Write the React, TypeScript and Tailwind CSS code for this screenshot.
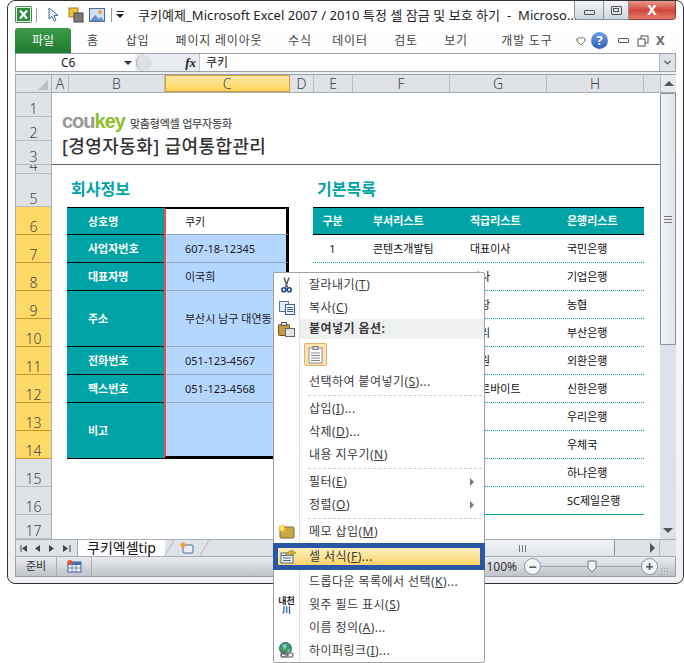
import { ChevronDown, Heart } from "lucide-react";

const columns = [
  { name: "A", w: "w-[17px]" },
  { name: "B", w: "w-[96px]" },
  { name: "C", w: "w-[125px]", active: true },
  { name: "D", w: "w-[24px]" },
  { name: "E", w: "w-[39px]" },
  { name: "F", w: "w-[97px]" },
  { name: "G", w: "w-[97px]" },
  { name: "H", w: "w-[97px]" },
  { name: "", w: "w-[17px]" },
];

const rows = [
  { n: 1, h: "h-[24px]" },
  { n: 2, h: "h-[24px]" },
  { n: 3, h: "h-[24px]" },
  { n: 4, h: "h-[9px]" },
  { n: 5, h: "h-[33px]" },
  { n: 6, h: "h-[28px]", on: true },
  { n: 7, h: "h-[28px]", on: true },
  { n: 8, h: "h-[28px]", on: true },
  { n: 9, h: "h-[28px]", on: true },
  { n: 10, h: "h-[28px]", on: true },
  { n: 11, h: "h-[28px]", on: true },
  { n: 12, h: "h-[28px]", on: true },
  { n: 13, h: "h-[28px]", on: true },
  { n: 14, h: "h-[28px]", on: true },
  { n: 15, h: "h-[28px]" },
  { n: 16, h: "h-[28px]" },
  { n: 17, h: "h-[24px]" },
];

const company = [
  { label: "상호명", value: "쿠키", h: "h-[28px]", first: true },
  { label: "사업자번호", value: "607-18-12345", h: "h-[28px]" },
  { label: "대표자명", value: "이국희", h: "h-[28px]" },
  { label: "주소", value: "부산시 남구 대연동", h: "h-[56px]" },
  { label: "전화번호", value: "051-123-4567", h: "h-[28px]" },
  { label: "팩스번호", value: "051-123-4568", h: "h-[28px]" },
  { label: "비고", value: "", h: "h-[56px]", last: true },
];

const lists = [
  ["1", "콘텐츠개발팀", "대표이사", "국민은행"],
  ["", "", "이사", "기업은행"],
  ["", "", "부장", "농협"],
  ["", "", "대리", "부산은행"],
  ["", "", "사원", "외환은행"],
  ["", "", "아르바이트", "신한은행"],
  ["", "", "", "우리은행"],
  ["", "", "", "우체국"],
  ["", "", "", "하나은행"],
  ["", "", "", "SC제일은행"],
];

const ribbonTabs = [
  { t: "홈", w: "w-[44px]" },
  { t: "삽입", w: "w-[45px]" },
  { t: "페이지 레이아웃", w: "w-[118px]" },
  { t: "수식", w: "w-[44px]" },
  { t: "데이터", w: "w-[56px]" },
  { t: "검토", w: "w-[56px]" },
  { t: "보기", w: "w-[44px]" },
  { t: "개발 도구", w: "w-[98px]" },
];

function Key({ k }: { k: string }) {
  return (
    <>
      (<span className="underline">{k}</span>)
    </>
  );
}

function MenuItem({ icon, children, arrow }: { icon?: React.ReactNode; children: React.ReactNode; arrow?: boolean }) {
  return (
    <div className="flex h-[23px] items-center">
      <div className="flex h-full w-[25px] shrink-0 items-center justify-center">{icon}</div>
      <div className="ml-[10px] flex-1 whitespace-nowrap">{children}</div>
      {arrow && <div className="mr-[10px] h-0 w-0 border-y-[4px] border-l-[4px] border-y-transparent border-l-[#777]" />}
    </div>
  );
}

function MenuSep() {
  return (
    <div className="flex h-[4px] items-center pl-[34px] pr-[2px]">
      <div className="w-full border-t border-dashed border-[#cfcfcf]" />
    </div>
  );
}

function ContextMenu() {
  return (
    <div className="absolute left-[273px] top-[272px] h-[391px] w-[212px] rounded-[2px] border border-[#a0a0a0] bg-white text-[12px] tracking-[0.45px] text-[#3a3a3a]">
      <div className="pointer-events-none absolute bottom-0 left-[25px] top-0 border-l border-[#e3e3e3]" />
      <MenuItem
        icon={
          <svg width="11" height="16" viewBox="0 0 11 16">
            <path d="M3 0.500l3.500 10M8 0.500l-3.500 10" stroke="#555" strokeWidth="1.400" fill="none" />
            <circle cx="2.800" cy="12.800" r="2" fill="none" stroke="#20408a" strokeWidth="1.600" />
            <circle cx="8.200" cy="12.800" r="2" fill="none" stroke="#20408a" strokeWidth="1.600" />
          </svg>
        }
      >
        잘라내기<Key k="T" />
      </MenuItem>
      <MenuItem
        icon={
          <svg width="16" height="14" viewBox="0 0 16 14">
            <rect x="0.500" y="0.500" width="9" height="10" fill="#dfe9f8" stroke="#5878ac" />
            <rect x="6.500" y="3.500" width="9" height="10" fill="#f4f7fc" stroke="#3d5f9a" />
            <path d="M8 6.500h6M8 8.500h6M8 10.500h6" stroke="#3d5f9a" />
          </svg>
        }
      >
        복사<Key k="C" />
      </MenuItem>
      <div className="flex h-[20px] items-center">
        <div className="flex h-full w-[25px] shrink-0 items-center justify-center">
          <svg width="17" height="15" viewBox="0 0 17 15" className="mt-[1px]">
            <rect x="0.500" y="2.500" width="11" height="11" rx="1" fill="#c99a3c" stroke="#6b5320" />
            <rect x="3.500" y="0.500" width="5" height="3" fill="#e8e8e8" stroke="#555" />
            <rect x="7.500" y="6.500" width="9" height="8" fill="#dfe3e8" stroke="#666" />
          </svg>
        </div>
        <div className="ml-[1px] flex h-full flex-1 items-center bg-[#eff0f2] pl-[9px] font-bold">붙여넣기 옵션:</div>
      </div>
      <div className="flex h-[31px] items-center pl-[30px]">
        <div className="flex h-[23px] w-[23px] items-center justify-center rounded-[2px] border border-[#e0b070] bg-[#fde4b0]">
          <svg width="15" height="18" viewBox="0 0 15 18">
            <rect x="1" y="2" width="13" height="15" fill="#fff" stroke="#8a8a8a" />
            <rect x="5" y="0.500" width="5" height="3" fill="#ddd" stroke="#777" />
            <path d="M3 7h9M3 9.500h9M3 12h9M3 14.500h9" stroke="#888" />
          </svg>
        </div>
      </div>
      <MenuItem>
        선택하여 붙여넣기<Key k="S" />...
      </MenuItem>
      <MenuSep />
      <MenuItem>
        삽입<Key k="I" />...
      </MenuItem>
      <MenuItem>
        삭제<Key k="D" />...
      </MenuItem>
      <MenuItem>
        내용 지우기<Key k="N" />
      </MenuItem>
      <MenuSep />
      <MenuItem arrow>
        필터<Key k="E" />
      </MenuItem>
      <MenuItem arrow>
        정렬<Key k="O" />
      </MenuItem>
      <MenuSep />
      <MenuItem
        icon={
          <svg width="17" height="15" viewBox="0 0 17 15">
            <rect x="2" y="3" width="14" height="11" rx="1" fill="#c9a94a" stroke="#7d6a2c" />
            <path d="M4 0.500l1 2 2-1-1 2 2 1-2 1 1 2-2-1-1 2-1-2-2 1 1-2-2-1 2-1-1-2 2 1z" fill="#ffe45c" stroke="#e8b820" strokeWidth="0.5" />
          </svg>
        }
      >
        메모 삽입<Key k="M" />
      </MenuItem>
      <div className="relative -mx-px flex h-[27px] items-center border-[5px] border-[#2a57a5] bg-linear-to-b from-[#fdf0bd] to-[#fbd466]">
        <div className="flex w-[21px] shrink-0 items-center justify-center">
          <svg width="17" height="15" viewBox="0 0 17 15">
            <rect x="1" y="4" width="12" height="10" fill="#eef3fa" stroke="#4a6a9c" />
            <path d="M1 6.500h12M3 9h8M3 11.500h8" stroke="#4a6a9c" />
            <path d="M5 5l7-4 4 3-7 3z" fill="#d9a83a" stroke="#7d8a3c" strokeWidth="0.7" />
          </svg>
        </div>
        <div className="ml-[10px] whitespace-nowrap">
          셀 서식<Key k="F" />...
        </div>
      </div>
      <MenuItem>
        드롭다운 목록에서 선택<Key k="K" />...
      </MenuItem>
      <MenuItem
        icon={
          <div className="flex flex-col items-center text-[9px] font-bold leading-[9px] tracking-normal text-[#222]">
            <span>내천</span>
            <span className="text-[#1d4fa5]">川</span>
          </div>
        }
      >
        윗주 필드 표시<Key k="S" />
      </MenuItem>
      <MenuItem>
        이름 정의<Key k="A" />...
      </MenuItem>
      <MenuItem
        icon={
          <svg width="17" height="17" viewBox="0 0 17 17">
            <circle cx="7.500" cy="6.500" r="6" fill="#3f9a4a" stroke="#2c6a8a" />
            <path d="M4 3l4-1 1 3-3 3zM9 8l3-1-1 4z" fill="#7fc8e8" />
            <rect x="3" y="11" width="7" height="4" rx="2" fill="none" stroke="#666" strokeWidth="1.500" />
            <rect x="8" y="11" width="7" height="4" rx="2" fill="none" stroke="#888" strokeWidth="1.500" />
          </svg>
        }
      >
        하이퍼링크<Key k="I" />...
      </MenuItem>
    </div>
  );
}

function TitleBar() {
  return (
    <div className="flex h-[27px] items-start text-[#222]">
      <div className="mt-[5px] flex items-center">
        <svg width="17" height="17" viewBox="0 0 17 17">
          <rect x="0.500" y="0.500" width="16" height="16" rx="1" fill="#e4f2e0" stroke="#4c8a50" />
          <rect x="2" y="2" width="13" height="13" fill="#2f8a3c" />
          <path d="M5 4.500l7 8M12 4.500l-7 8" stroke="#fff" strokeWidth="2.200" />
        </svg>
        <div className="ml-[4px] h-[14px] border-l border-[#999]" />
        <svg width="12" height="16" viewBox="0 0 12 16" className="ml-[10px]">
          <path d="M2 1l0 11 3-2.500 2 4.500 2-1-2-4.500 4 0z" fill="#e8eef8" stroke="#4a6a9c" />
        </svg>
        <svg width="16" height="16" viewBox="0 0 16 16" className="ml-[9px]">
          <rect x="1" y="1" width="9" height="9" fill="#f2c23c" stroke="#a67c1c" />
          <rect x="6" y="6" width="9" height="9" fill="#7a7a7a" stroke="#444" />
        </svg>
        <svg width="16" height="16" viewBox="0 0 16 16" className="ml-[5px]">
          <rect x="0.500" y="1.500" width="15" height="13" fill="#cfe0f5" stroke="#4a6a9c" />
          <path d="M1 14l5-6 4 4 2-2 3 4z" fill="#6a8fc0" />
          <circle cx="11" cy="5" r="2" fill="#f0a040" />
        </svg>
        <div className="ml-[6px] h-[14px] border-l border-[#999]" />
        <div className="ml-[4px] flex flex-col items-center gap-[2px]">
          <div className="w-[7px] border-t border-[#222]" />
          <div className="h-0 w-0 border-x-[4px] border-t-[4px] border-x-transparent border-t-[#222]" />
        </div>
      </div>
      <div className="ml-[14px] mt-[5px] w-[426px] whitespace-pre text-[13px] leading-[18px] tracking-[0.05px]">
        쿠키예제_Microsoft Excel 2007 / 2010 특정 셀 잠금 및 보호 하기  -  Microso...
      </div>
      <div className="ml-auto flex h-[19px]">
        <div className="flex w-[30px] items-center justify-center rounded-bl-[4px] border border-t-0 border-[#8a929c] bg-linear-to-b from-[#f3f5f8] to-[#cfd5dd]">
          <div className="mt-[4px] h-[5px] w-[11px] rounded-[1px] border border-[#555]" />
        </div>
        <div className="flex w-[25px] items-center justify-center border-b border-r border-[#8a929c] bg-linear-to-b from-[#f3f5f8] to-[#cfd5dd]">
          <div className="flex h-[9px] w-[11px] items-center justify-center rounded-[1px] border border-[#555]">
            <div className="h-[4px] w-[6px] border border-[#555]" />
          </div>
        </div>
        <div className="flex w-[47px] items-center justify-center rounded-br-[4px] border-b border-r border-[#8a4040] bg-linear-to-b from-[#e89a8c] via-[#d0463a] to-[#e07a68] text-[14px] font-bold leading-none text-white">
          X
        </div>
      </div>
    </div>
  );
}

function RibbonTabs() {
  return (
    <div className="flex h-[26px] items-end border-b border-[#9aa2ac] text-[12px] text-[#444]">
      <div className="flex h-[25px] w-[56px] items-center justify-center rounded-t-[3px] bg-linear-to-b from-[#3d9a48] to-[#1f7a30] text-white">파일</div>
      {ribbonTabs.map(tab => (
        <div key={tab.t} className={`${tab.w} flex h-[25px] items-center justify-center tracking-[0.8px]`}>
          {tab.t}
        </div>
      ))}
      <div className="flex h-[25px] flex-1 items-center">
        <Heart size={10} strokeWidth={2} className="text-[#444]" />
        <div className="ml-[5px] flex h-[17px] w-[17px] items-center justify-center rounded-full bg-linear-to-b from-[#6da0e8] to-[#2a5fc0] text-[13px] font-bold text-white">?</div>
        <div className="ml-[10px] h-[5px] w-[11px] rounded-[1px] border border-[#555]" />
        <svg width="12" height="12" viewBox="0 0 12 12" className="ml-[8px]">
          <rect x="4" y="1" width="7" height="7" fill="none" stroke="#555" />
          <rect x="1" y="4" width="7" height="7" fill="#fff" stroke="#555" />
        </svg>
        <div className="ml-[7px] text-[13px] font-bold leading-none text-[#666]">X</div>
      </div>
    </div>
  );
}

function FormulaBar() {
  return (
    <>
      <div className="flex h-[18px] items-center border-x border-b border-[#9aa2ac] bg-white text-[12px] text-[#222]">
        <div className="flex h-full w-[119px] items-center justify-between pl-[45px] pr-[3px]">
          <span>C6</span>
          <div className="h-0 w-0 border-x-[4px] border-t-[4px] border-x-transparent border-t-[#333]" />
        </div>
        <div className="flex h-full w-[64px] items-center bg-[#e8ebef]">
          <div className="ml-[1px] h-[16px] w-[16px] rounded-full border-l border-[#aab] bg-[#dde0e5]" />
          <span className="ml-auto mr-[3px] font-['Liberation_Serif',serif] text-[13px] font-bold italic text-[#222]">fx</span>
        </div>
        <div className="flex h-full flex-1 items-center border-l border-[#c0c4ca] pl-[6px]">쿠키</div>
        <div className="flex h-full w-[16px] items-center justify-center border-l border-[#b0b6be] bg-[#dfe3e8]">
          <ChevronDown size={11} strokeWidth={3} className="text-[#555]" />
        </div>
      </div>
      <div className="h-[3px] border-b border-[#9aa2ac] bg-[#eceef1]" />
    </>
  );
}

function ColumnHeader() {
  return (
    <div className="flex h-[18px] items-stretch border-b border-[#a8aeb6] bg-[#dfe3e8] text-[14px] font-light text-[#444]">
      <div className="relative w-[37px] shrink-0 border-x border-[#a8aeb6]">
        <div className="absolute bottom-[2px] right-[3px] h-0 w-0 border-b-[10px] border-l-[10px] border-b-[#bcc1c8] border-l-transparent" />
      </div>
      {columns.map((c, i) => (
        <div
          key={i}
          className={`${c.w} flex shrink-0 items-center justify-center border-r ${
            c.active ? "border-[#c5962e] bg-linear-to-b from-[#fce9a8] to-[#ffd34e] outline outline-[#d0a040] -outline-offset-1" : "border-[#b8bdc4]"
          }`}
        >
          {c.name}
        </div>
      ))}
      <div className="flex w-[16px] items-center justify-center bg-[#e6e9ee]">
        <div className="h-0 w-0 border-x-[5px] border-b-[5px] border-x-transparent border-b-[#555]" />
      </div>
    </div>
  );
}

function RowHeader() {
  return (
    <div className="flex w-[37px] shrink-0 flex-col border-x border-[#a8aeb6] bg-[#dfe3e8] text-[14px] font-light text-[#444]">
      {rows.map(r => (
        <div
          key={r.n}
          className={`${r.h} flex items-end justify-center overflow-hidden border-b leading-[15px] ${
            r.on ? "border-[#c5962e] bg-[#ffd966]" : "border-[#b8bdc4]"
          }`}
        >
          {r.n}
        </div>
      ))}
    </div>
  );
}

function CompanyTable() {
  return (
    <div className="ml-[15px] flex w-[222px] shrink-0 flex-col text-[11px]">
      {company.map(row => (
        <div key={row.label} className={`${row.h} flex`}>
          <div
            className={`flex w-[97px] shrink-0 items-center border-b border-black bg-[#00a4a6] pl-[21px] pt-[2px] font-bold text-white ${
              row.first ? "border-t" : ""
            }`}
          >
            {row.label}
          </div>
          <div
            className={`flex flex-1 items-center border-l-[2px] border-r-[3px] border-l-[#ee4b4b] border-r-black pl-[19px] pt-[2px] text-[#1a1a1a] ${
              row.first ? "border-t-[2px] border-t-black bg-white" : "bg-[#b5d7ff]"
            } ${row.last ? "border-b-[3px] border-b-black" : "border-b border-b-[#8fa8c4]"}`}
          >
            {row.value}
          </div>
        </div>
      ))}
    </div>
  );
}

function ListTable() {
  return (
    <div className="ml-[24px] flex w-[331px] shrink-0 flex-col text-[11px] text-[#111]">
      <div className="flex h-[28px] items-center border-y border-black bg-[#00a4a6] font-bold text-white">
        <div className="w-[39px] text-center">구분</div>
        <div className="w-[97px] pl-[21px]">부서리스트</div>
        <div className="w-[97px] pl-[21px]">직급리스트</div>
        <div className="w-[98px] pl-[21px]">은행리스트</div>
      </div>
      {lists.map((row, i) => (
        <div
          key={i}
          className={`flex h-[28px] items-center border-b border-[#00a4a6] pt-[2px] ${i === lists.length - 1 ? "" : "border-dotted"}`}
        >
          <div className="w-[39px] text-center">{row[0]}</div>
          <div className="w-[97px] pl-[21px]">{row[1]}</div>
          <div className="w-[97px] pl-[21px]">{row[2]}</div>
          <div className="w-[98px] pl-[21px]">{row[3]}</div>
        </div>
      ))}
    </div>
  );
}

function Sheet() {
  return (
    <div className="flex h-[446px] overflow-hidden">
      <RowHeader />
      <div className="flex w-[608px] shrink-0 flex-col bg-white">
        <div className="flex h-[72px] shrink-0 flex-col border-b border-[#666] pl-[10px] pt-[17px]">
          <div className="flex items-baseline">
            <span className="font-['Liberation_Sans',sans-serif] text-[20px] font-bold leading-[22px] tracking-[-1px] text-[#999]">
              cou<span className="text-[#8cbf26]">key</span>
            </span>
            <span className="ml-[5px] text-[11px] font-medium tracking-[-0.2px] text-[#555]">맞춤형엑셀 업무자동화</span>
          </div>
          <div className="mt-[1px] text-[18px] font-medium leading-[24px] tracking-[0.4px] text-[#333]">[경영자동화] 급여통합관리</div>
        </div>
        <div className="flex h-[42px] shrink-0 items-end pb-[8px] text-[16px] font-bold leading-[20px] text-[#00a4a6]">
          <div className="ml-[19px] w-[246px]">회사정보</div>
          <div>기본목록</div>
        </div>
        <div className="flex items-start">
          <CompanyTable />
          <ListTable />
        </div>
      </div>
      <div className="flex w-[16px] shrink-0 flex-col items-center bg-[#dde1e9]">
        <div className="flex h-[252px] w-full items-center justify-center rounded-[1px] border border-[#8a929c] bg-linear-to-r from-[#f2f4f8] to-[#dfe3ea]">
          <div className="h-[7px] w-[8px] border-y border-[#777] bg-[linear-gradient(#777,#777)] bg-[length:100%_1px] bg-center bg-no-repeat" />
        </div>
        <div className="mt-auto mb-[6px] h-0 w-0 border-x-[5px] border-t-[5px] border-x-transparent border-t-[#555]" />
      </div>
    </div>
  );
}

function SheetTabs() {
  return (
    <div className="flex h-[17px] items-stretch border-t border-[#a8aeb6] bg-[#dfe3e8] text-[#444]">
      <div className="flex w-[63px] items-center justify-center border-x border-[#a8aeb6]">
        <svg width="54" height="9" viewBox="0 0 54 9">
          <path d="M1 1v7" stroke="#444" />
          <path d="M7 1v7l-5-3.500zM20 1v7l-5-3.500zM29 1v7l5-3.500zM43 1v7l5-3.500z" fill="#444" />
          <path d="M50 1v7" stroke="#444" />
        </svg>
      </div>
      <div className="flex w-[87px] items-center justify-center rounded-b-[2px] bg-white text-[14px] leading-none text-[#111]">쿠키엑셀tip</div>
      <div className="ml-[4px] flex w-[36px] items-center justify-center skew-x-[-30deg] border-x border-[#b0b6be]">
        <svg width="14" height="12" viewBox="0 0 14 12" className="skew-x-[30deg]">
          <rect x="3" y="3" width="10" height="8" rx="1" fill="#e8edf4" stroke="#4a6a9c" />
          <circle cx="3" cy="3" r="2.500" fill="#f2a030" />
        </svg>
      </div>
      <div className="ml-auto flex w-[245px] items-stretch">
        <div className="flex flex-1 items-center justify-end rounded-r-[2px] border-x border-[#8a929c] bg-linear-to-b from-[#f2f4f8] to-[#dfe3ea] pr-[88px]">
          <div className="h-[7px] w-[7px] border-x border-[#777] bg-[linear-gradient(#777,#777)] bg-[length:1px_100%] bg-center bg-no-repeat" />
        </div>
        <div className="flex w-[45px] items-center justify-end border-r border-[#b8bdc4] pr-[4px]">
          <div className="h-0 w-0 border-y-[5px] border-l-[5px] border-y-transparent border-l-[#555]" />
        </div>
        <div className="w-[16px]" />
      </div>
    </div>
  );
}

function StatusBar() {
  return (
    <div className="flex h-[21px] items-stretch border border-t-[#a8aeb6] border-[#9aa0a8] bg-linear-to-b from-[#e9ebee] to-[#bfc4ca] text-[11px] text-[#333]">
      <div className="flex w-[41px] items-center justify-center border-r border-[#a8aeb6]">준비</div>
      <div className="flex w-[35px] items-center justify-center border-r border-[#a8aeb6]">
        <svg width="15" height="13" viewBox="0 0 15 13">
          <rect x="1" y="2" width="13" height="10" fill="#f2f5fa" stroke="#3d5f9a" />
          <rect x="1" y="2" width="13" height="3" fill="#3d6fb0" />
          <path d="M5 5v7M9 5v7M1 8h13" stroke="#6a8cc0" />
          <circle cx="3" cy="2.500" r="2.500" fill="#e8502a" />
        </svg>
      </div>
      <div className="ml-auto flex items-center pr-[7px]">
        <span className="text-[12px]">100%</span>
        <div className="ml-[7px] flex h-[17px] w-[17px] items-center justify-center rounded-full border border-[#8a929c] bg-[#f4f5f7] text-[14px] font-bold leading-none text-[#555]">−</div>
        <div className="relative flex h-full w-[100px] items-center">
          <div className="w-full border-t border-[#9aa0a8]" />
          <svg width="10" height="13" viewBox="0 0 10 13" className="absolute left-[46px] top-[3px]">
            <path d="M1 1h8v7l-4 4-4-4z" fill="#f2f4f6" stroke="#777" />
          </svg>
        </div>
        <div className="flex h-[17px] w-[17px] items-center justify-center rounded-full border border-[#8a929c] bg-[#f4f5f7] text-[14px] font-bold leading-none text-[#555]">+</div>
        <div className="ml-[2px] mt-auto mb-[1px] h-[8px] w-[8px] bg-[radial-gradient(#999_1px,transparent_1px)] bg-[length:3px_3px]" />
      </div>
    </div>
  );
}

export default function App() {
  return (
    <div className="relative h-[663px] w-[684px] overflow-hidden bg-white font-['Noto_Sans','Noto_Sans_CJK_KR',sans-serif]">
      <div className="ml-[7px] h-[584px] w-[677px] rounded-[8px] border border-[#333] bg-linear-to-b from-white to-[#eef0f3] px-[7px]">
        <TitleBar />
        <RibbonTabs />
        <FormulaBar />
        <ColumnHeader />
        <Sheet />
        <SheetTabs />
        <StatusBar />
      </div>
      <ContextMenu />
    </div>
  );
}
